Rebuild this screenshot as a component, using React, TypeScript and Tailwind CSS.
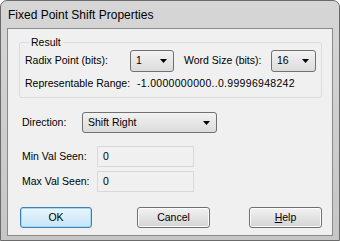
import React from 'react';

const font = { fontFamily: '"Liberation Sans", Arial, sans-serif' };

const ComboBox = ({ value, className }: { value: string; className: string }) => (
  <div
    className={`flex items-center justify-between rounded-[3px] border border-[#707070] bg-gradient-to-b from-[#f2f2f2] to-[#dcdcdc] pl-[5px] pr-[6px] ${className}`}
  >
    <span>{value}</span>
    <svg width="7" height="4" viewBox="0 0 7 4">
      <path d="M0 0h7L3.5 4z" fill="#000" />
    </svg>
  </div>
);

const ReadOnlyField = ({ value }: { value: string }) => (
  <div className="flex h-[21px] w-[97px] items-center border border-[#d9d9d9] bg-[#f0f0f0] pl-[5px]">
    {value}
  </div>
);

const DialogButton = ({ children, primary }: { children: React.ReactNode; primary?: boolean }) => (
  <button
    className={`flex h-[21px] items-center justify-center rounded-[3px] border ${
      primary
        ? 'w-[72px] border-[#3c7fb1] bg-gradient-to-b from-[#eaf6fd] to-[#c4e5f8] shadow-[inset_0_0_0_1px_#a7d9f5]'
        : 'w-[73px] border-[#707070] bg-gradient-to-b from-[#f2f2f2] to-[#d4d4d4] shadow-[inset_0_0_0_1px_#fcfcfc]'
    }`}
  >
    {children}
  </button>
);

export default function App() {
  return (
    <div className="h-[241px] w-[340px] bg-white text-[10.5px] text-black" style={font}>
      <div className="flex h-full w-full flex-col rounded-t-[7px] border border-[#6b6b6b] bg-gradient-to-b from-[#d6d6d6] to-[#c6c6c6] px-[6px] pb-[4px]">
        {/* Title bar */}
        <div className="flex h-[27px] items-center pl-[1px] pt-[1px] text-[12px] text-black">
          Fixed Point Shift Properties
        </div>

        {/* Client area */}
        <div className="flex flex-1 flex-col border border-[#8a8a8a] bg-[#f0f0f0]">
          <fieldset className="ml-[11px] mt-[7px] h-[62px] w-[303px] rounded-[3px] border border-[#d5dfe5] px-[5px]">
            <legend className="ml-[4px] px-[2px] leading-[13px]">Result</legend>
            <div className="mt-[1px] flex items-center">
              <span className="w-[105px]">Radix Point (bits):</span>
              <ComboBox value="1" className="h-[22px] w-[44px]" />
              <span className="ml-[10px] w-[87px]">Word Size (bits):</span>
              <ComboBox value="16" className="h-[22px] w-[45px]" />
            </div>
            <div className="mt-[4px] flex items-center">
              <span className="w-[112px]">Representable Range:</span>
              <span className="tracking-[0.3px]">-1.0000000000..0.99996948242</span>
            </div>
          </fieldset>

          <div className="ml-[14px] mt-[14px] flex items-center">
            <span className="w-[60px]">Direction:</span>
            <ComboBox value="Shift Right" className="h-[21px] w-[135px]" />
          </div>

          <div className="ml-[14px] mt-[13px] flex items-center">
            <span className="w-[75px]">Min Val Seen:</span>
            <ReadOnlyField value="0" />
          </div>
          <div className="ml-[14px] mt-[4px] flex items-center">
            <span className="w-[75px]">Max Val Seen:</span>
            <ReadOnlyField value="0" />
          </div>

          <div className="ml-[12px] mt-[15px] flex">
            <DialogButton primary>OK</DialogButton>
            <div className="ml-[45px]">
              <DialogButton>Cancel</DialogButton>
            </div>
            <div className="ml-[39px]">
              <DialogButton>
                <span>
                  <span className="underline">H</span>elp
                </span>
              </DialogButton>
            </div>
          </div>
        </div>
      </div>
    </div>
  );
}
